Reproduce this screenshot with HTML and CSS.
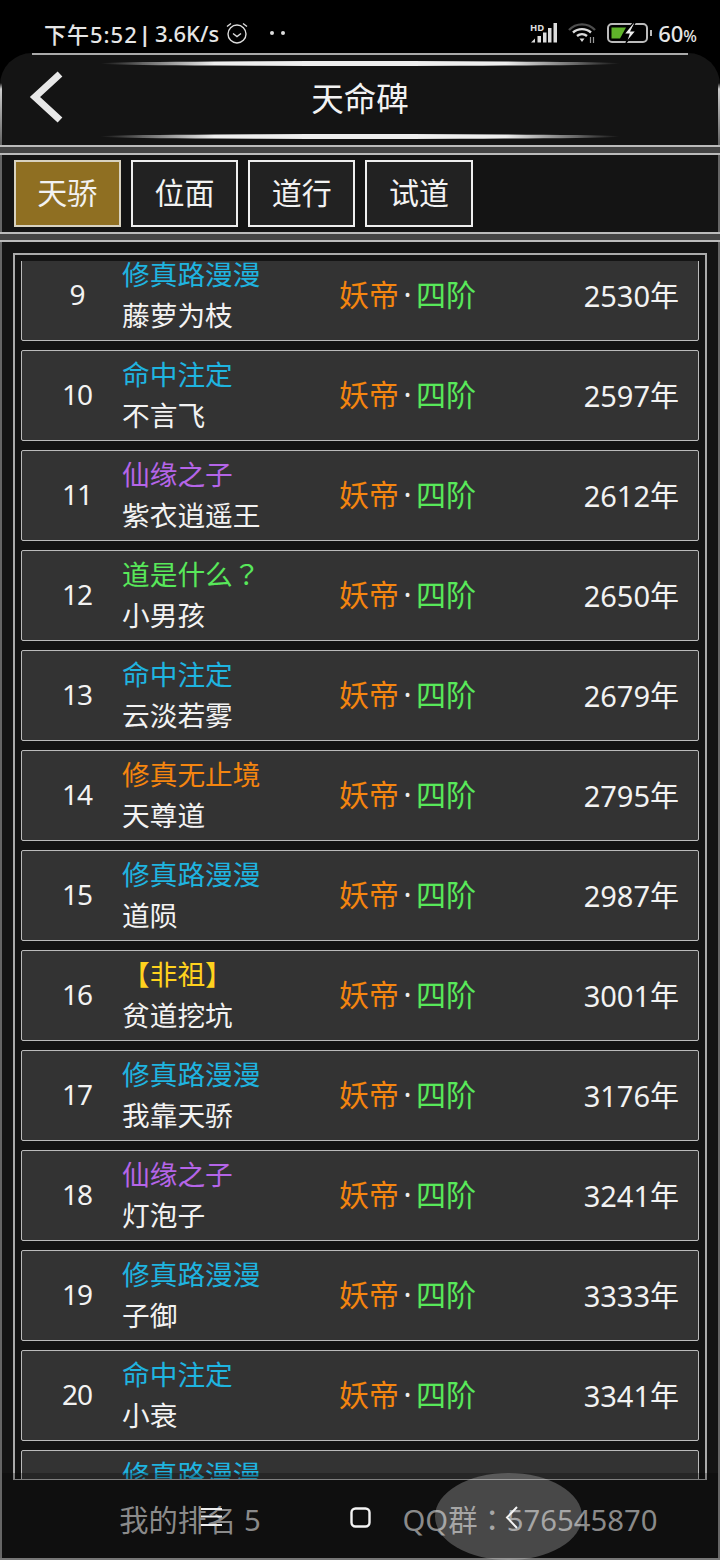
FILE: index.html
```html
<!DOCTYPE html>
<html>
<head>
<meta http-equiv="Content-Type" content="text/html; charset=utf-8">
<title>天命碑</title>
<link rel="stylesheet" href="styles.css">
</head>
<body>

<div id="div_page">

<div id="div_status">
<div class="status_left">
<span class="status_time">下午5:52</span><span class="status_bar">|</span><span>3.6K/s</span>
<svg class="icon_alarm" width="24" height="24" viewBox="0 0 24 24" fill="none" stroke="#ddd" stroke-width="1.4"><circle cx="12" cy="13" r="9"/><path d="M8 12.5l4 3 4-3"/><path d="M2 5.5l4-3M22 5.5l-4-3"/></svg>
<span class="status_dots"><i></i><i></i></span>
</div>
<div class="status_right">
<svg width="28" height="20" viewBox="0 0 28 20"><text x="0" y="7.500" font-size="9.500" font-weight="700" fill="#ddd" font-family="Noto Sans">HD</text><path d="M1 19.500l4-4v4zM7.500 13h3.500v6.500H7.500zM13 9.500h3.500v10H13zM18 5h3.500v14.500H18zM23.500 0H27v19.500h-3.500z" fill="#ddd"/></svg>
<svg class="icon_wifi" width="28" height="20" viewBox="0 0 28 20" fill="none" stroke-width="2.400"><path d="M1 7c7-7.500 19-7.500 26 0" stroke="#4d4d4d"/><path d="M5 9.500c5-4.500 13-4.500 18 0M9 13c3-2.500 7-2.500 10 0" stroke="#ddd"/><path d="M11.500 15.500h5L14 19z" fill="#ddd" stroke="none"/><path d="M22.500 14v6M25.500 14v6" stroke="#999" stroke-width="1.200"/></svg>
<svg class="icon_batt" width="45" height="20" viewBox="0 0 45 20"><rect x="1" y="1" width="39" height="18" rx="4" fill="none" stroke="#bbb" stroke-width="2"/><path d="M4.500 4.500H19L13 15.500H4.500z" fill="#5fb32a"/><path d="M26 0l-9 11h5l-3 9 10-12h-5l4-8z" fill="#eee" stroke="#000" stroke-width="1.200"/><rect x="43" y="7" width="2" height="6" fill="#bbb"/></svg>
<span class="status_batt">60<small>%</small></span>
</div>
</div>

<div id="div_panel">

<div id="div_header">
<div class="glow"></div>
<div class="header_row">
<svg class="icon_back" width="36" height="52" viewBox="0 0 36 52" fill="none" stroke="#e8e8e8" stroke-width="7"><path d="M32 3L7 26l25 23"/></svg>
<div id="gtitle">天命碑</div>
</div>
<div class="glow"></div>
</div>

<div class="separator"></div>

<div id="div_tabs">
<div class="tab tab_active">天骄</div>
<div class="tab">位面</div>
<div class="tab">道行</div>
<div class="tab">试道</div>
</div>

<div class="separator"></div>

<div id="div_listsection">
<div id="div_frame">
<div id="div_list">
<div class="row row_first"><div class="row_rank">9</div><div class="row_name"><div class="c_blue">修真路漫漫</div><div>藤萝为枝</div></div><div class="row_realm"><span class="c_orange">妖帝</span><span class="dot">·</span><span class="c_green">四阶</span></div><div class="row_year">2530年</div></div>
<div class="row"><div class="row_rank">10</div><div class="row_name"><div class="c_blue">命中注定</div><div>不言飞</div></div><div class="row_realm"><span class="c_orange">妖帝</span><span class="dot">·</span><span class="c_green">四阶</span></div><div class="row_year">2597年</div></div>
<div class="row"><div class="row_rank">11</div><div class="row_name"><div class="c_purple">仙缘之子</div><div>紫衣逍遥王</div></div><div class="row_realm"><span class="c_orange">妖帝</span><span class="dot">·</span><span class="c_green">四阶</span></div><div class="row_year">2612年</div></div>
<div class="row"><div class="row_rank">12</div><div class="row_name"><div class="c_green">道是什么<span class="punct">？</span></div><div>小男孩</div></div><div class="row_realm"><span class="c_orange">妖帝</span><span class="dot">·</span><span class="c_green">四阶</span></div><div class="row_year">2650年</div></div>
<div class="row"><div class="row_rank">13</div><div class="row_name"><div class="c_blue">命中注定</div><div>云淡若雾</div></div><div class="row_realm"><span class="c_orange">妖帝</span><span class="dot">·</span><span class="c_green">四阶</span></div><div class="row_year">2679年</div></div>
<div class="row"><div class="row_rank">14</div><div class="row_name"><div class="c_orange">修真无止境</div><div>天尊道</div></div><div class="row_realm"><span class="c_orange">妖帝</span><span class="dot">·</span><span class="c_green">四阶</span></div><div class="row_year">2795年</div></div>
<div class="row"><div class="row_rank">15</div><div class="row_name"><div class="c_blue">修真路漫漫</div><div>道陨</div></div><div class="row_realm"><span class="c_orange">妖帝</span><span class="dot">·</span><span class="c_green">四阶</span></div><div class="row_year">2987年</div></div>
<div class="row"><div class="row_rank">16</div><div class="row_name"><div class="c_yellow">【非祖】</div><div>贫道挖坑</div></div><div class="row_realm"><span class="c_orange">妖帝</span><span class="dot">·</span><span class="c_green">四阶</span></div><div class="row_year">3001年</div></div>
<div class="row"><div class="row_rank">17</div><div class="row_name"><div class="c_blue">修真路漫漫</div><div>我靠天骄</div></div><div class="row_realm"><span class="c_orange">妖帝</span><span class="dot">·</span><span class="c_green">四阶</span></div><div class="row_year">3176年</div></div>
<div class="row"><div class="row_rank">18</div><div class="row_name"><div class="c_purple">仙缘之子</div><div>灯泡子</div></div><div class="row_realm"><span class="c_orange">妖帝</span><span class="dot">·</span><span class="c_green">四阶</span></div><div class="row_year">3241年</div></div>
<div class="row"><div class="row_rank">19</div><div class="row_name"><div class="c_blue">修真路漫漫</div><div>子御</div></div><div class="row_realm"><span class="c_orange">妖帝</span><span class="dot">·</span><span class="c_green">四阶</span></div><div class="row_year">3333年</div></div>
<div class="row"><div class="row_rank">20</div><div class="row_name"><div class="c_blue">命中注定</div><div>小衰</div></div><div class="row_realm"><span class="c_orange">妖帝</span><span class="dot">·</span><span class="c_green">四阶</span></div><div class="row_year">3341年</div></div>
<div class="row"><div class="row_rank"></div><div class="row_name"><div class="c_blue">修真路漫漫</div><div>&nbsp;</div></div></div>
</div>
</div>
</div>

<div id="div_bottombar">
<div class="bottom_text">我的排名 5</div>
<div class="bottom_text">QQ群<span class="punct">：</span>576545870</div>
</div>

</div>

<div id="div_bubble"></div>
<svg class="nav_icon nav_menu" width="24" height="20" viewBox="0 0 24 20" fill="none" stroke="#eee" stroke-width="2.200"><path d="M1 2h21M1 9.500h21M1 18h21"/></svg>
<svg class="nav_icon nav_home" width="21" height="21" viewBox="0 0 21 21" fill="none" stroke="#f4f4f4" stroke-width="2.400"><rect x="1.500" y="1.500" width="18" height="18" rx="4"/></svg>
<svg class="nav_icon nav_back" width="13" height="23" viewBox="0 0 13 23" fill="none" stroke="#f4f4f4" stroke-width="2"><path d="M12 1L2 11.500 12 22"/></svg>

</div>

</body>
</html>
```

FILE: styles.css
```css
*{
box-sizing: border-box;
}

body{
margin: 0;
background-color: #000;
font-family: "Noto Sans", "Noto Sans CJK SC", sans-serif;
color: #f2f2f2;
}

#div_page{
position: relative;
display: flex;
flex-direction: column;
width: 720px;
height: 1560px;
overflow: hidden;
}

/* status bar */
#div_status{
display: flex;
flex: none;
justify-content: space-between;
align-items: center;
height: 53px;
padding: 13px 23px 0 44px;
font-size: 22px;
font-weight: 500;
color: #e6e6e6;
}

.status_left{
display: flex;
align-items: center;
}

.status_time{
letter-spacing: 1px;
}

.status_bar{
margin: 0 4px 0 1px;
font-weight: 700;
}

.icon_alarm{
margin-left: 6px;
}

.status_dots{
display: flex;
gap: 7px;
margin-left: 21px;
}

.status_dots i{
width: 4px;
height: 4px;
border-radius: 50%;
background-color: #ddd;
}

.status_right{
display: flex;
align-items: center;
}

.icon_wifi{
margin-left: 10px;
}

.icon_batt{
margin-left: 11px;
}

.status_batt{
margin-left: 6px;
font-size: 22px;
font-weight: 500;
}

.status_batt small{
font-size: 16px;
}

/* panel */
#div_panel{
display: flex;
position: relative;
flex: 1;
flex-direction: column;
min-height: 0;
border-bottom: 2px solid #777;
border-radius: 32px 32px 0 0;
background-color: #141414;
}

/* top line stops where the corners begin */
#div_panel::before{
content: "";
position: absolute;
top: 0;
left: 32px;
right: 32px;
height: 2px;
background-color: #aaa;
}

/* side lines fade in below the corners */
#div_panel::after{
content: "";
position: absolute;
top: 30px;
left: 0;
right: 0;
bottom: 0;
background:
linear-gradient(#111, #ccc 6px, #666 60px) left top / 2px 100% no-repeat,
linear-gradient(#111, #ccc 6px, #666 60px) right top / 2px 100% no-repeat;
pointer-events: none;
}

#div_header{
display: flex;
flex: none;
flex-direction: column;
align-items: center;
justify-content: space-between;
height: 92px;
padding: 8px 0 6px;
}

.glow{
flex: none;
width: 520px;
height: 5px;
border-radius: 50%;
background: linear-gradient(90deg, rgba(255,255,255,0), #eee 22%, #eee 78%, rgba(255,255,255,0));
}

.header_row{
display: flex;
position: relative;
justify-content: center;
align-items: center;
width: 100%;
}

.icon_back{
position: absolute;
left: 28px;
top: -3px;
}

#gtitle{
margin-bottom: 2px;
font-size: 32.500px;
line-height: 50px;
}

.separator{
position: relative;
z-index: 1;
flex: none;
height: 10px;
border-top: 2px solid #bbb;
border-bottom: 2px solid #bbb;
background-color: #444;
}

/* tabs */
#div_tabs{
display: flex;
flex: none;
gap: 10px;
height: 77px;
padding: 5px 0 0 13.500px;
}

.tab{
width: 107.300px;
height: 67px;
border: 2px solid #eee;
background-color: #222;
font-size: 30px;
line-height: 62px;
text-align: center;
}

.tab_active{
border-color: #d8d2c0;
background-color: #8f6f22;
}

/* list */
#div_listsection{
flex: 1;
min-height: 0;
padding: 11px 13px 0;
}

#div_frame{
display: flex;
height: 1227px;
padding: 6px 6px 0;
border: 2px solid #aaa;
border-bottom-width: 1px;
}

#div_list{
flex: 1;
overflow: hidden;
}

.row{
display: flex;
align-items: center;
height: 91px;
margin-bottom: 9px;
border: 1px solid #bbb;
border-radius: 2px;
background-color: #333;
}

.row_first{
margin-top: -11px;
}

.row_rank{
width: 90px;
margin-left: 10px;
padding-bottom: 4px;
font-size: 28px;
letter-spacing: -1px;
text-align: center;
}

.row_name{
width: 217px;
padding-bottom: 2px;
font-size: 27.700px;
line-height: 41px;
white-space: nowrap;
}

.row_realm{
padding-bottom: 5px;
font-size: 30px;
white-space: nowrap;
}

.dot{
padding: 0 4.500px;
color: #eee;
}

.row_year{
flex: 1;
padding-right: 19px;
padding-bottom: 4px;
font-size: 29px;
text-align: right;
}

.punct{
font-family: "Noto Sans CJK TC", sans-serif;
}

.c_blue{ color: #1fb4e0; }
.c_purple{ color: #b565e8; }
.c_green{ color: #58e85a; }
.c_orange{ color: #f5850f; }
.c_yellow{ color: #ffd21e; }

/* bottom bar sits over the end of the list */
#div_bottombar{
display: grid;
position: absolute;
left: 0;
right: 0;
bottom: 0;
grid-template-columns: 1fr 1fr;
align-items: center;
height: 85px;
padding: 5px 20px 0;
background-color: rgba(0,0,0,0.25);
}

.bottom_text{
font-size: 29.300px;
color: #8a8a8a;
text-align: center;
white-space: nowrap;
}

/* system nav overlay */
#div_bubble{
position: absolute;
left: 435px;
top: 1473px;
width: 147px;
height: 87px;
border-radius: 50%;
background-color: rgba(255,255,255,0.24);
}

.nav_icon{
position: absolute;
}

.nav_menu{
left: 200px;
top: 1507px;
}

.nav_home{
left: 350px;
top: 1507px;
}

.nav_back{
left: 505px;
top: 1506px;
}
```
